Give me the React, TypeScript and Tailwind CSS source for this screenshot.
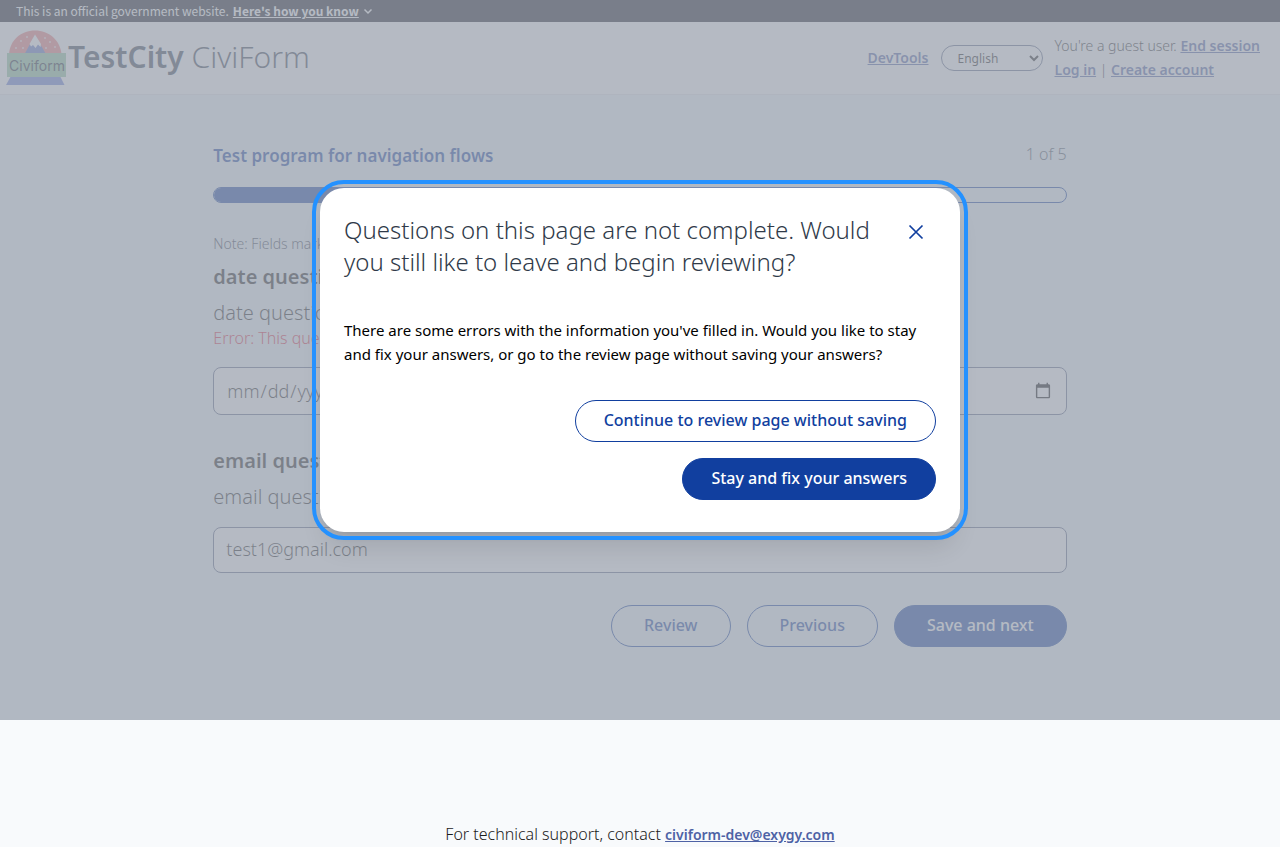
import React from 'react';

const outlineButton =
  'h-[42px] rounded-full border border-[#113f9f] pb-0.5 text-base font-medium text-[#113f9f] cursor-pointer whitespace-nowrap';
const solidButton =
  'h-[42px] rounded-full border border-[#113f9f] bg-[#113f9f] pb-0.5 text-base font-medium text-white cursor-pointer whitespace-nowrap';
const link = 'text-sm font-semibold text-[#4e62a5] underline';

function Logo() {
  return (
    <svg width="62" height="58" viewBox="0 0 62 58" role="img" aria-label="Civiform logo">
      <path d="M3 25 C4 11 15 1.500 29 1.500 S54 11 55.500 25 Z" fill="#f08080" />
      <g fill="#fff" fillOpacity="0.7">
        <circle cx="15" cy="12" r="1" />
        <circle cx="21" cy="8" r="1" />
        <circle cx="10" cy="19" r="1" />
        <circle cx="17" cy="19" r="1" />
        <circle cx="39" cy="9" r="1" />
        <circle cx="44" cy="13" r="1" />
        <circle cx="40" cy="19" r="1" />
        <circle cx="49" cy="18" r="1" />
      </g>
      <path d="M29 6 L40.500 26 H18 Z" fill="#6078c8" />
      <path d="M29 5.500 L35 15 L34.500 18 L32 15.500 L29.500 19 L27 16 L25 17.500 L23.500 15 Z" fill="#fff" />
      <path d="M5 47 H54 L58.500 56 H0 Z" fill="#6a80d8" />
      <rect x="1" y="24" width="59" height="24" fill="#90c8a0" />
      <text x="31" y="42" textAnchor="middle" fontSize="14" fontFamily="Inter, sans-serif" fill="#1f2937">
        Civiform
      </text>
    </svg>
  );
}

function Banner() {
  return (
    <div className="flex h-[22px] items-center gap-1 bg-[#10131c] px-4 font-['Noto_Sans_CJK_JP',sans-serif] text-xs leading-none text-white">
      <p>This is an official government website.</p>
      <button type="button" className="flex cursor-pointer items-center gap-1 font-bold">
        <span className="underline">Here&#39;s how you know</span>
        <svg width="10" height="10" viewBox="0 0 10 10" fill="none" stroke="currentColor" strokeWidth="1.500" aria-hidden="true">
          <path d="M1.500 3.500 L5 7 L8.500 3.500" />
        </svg>
      </button>
    </div>
  );
}

function Header() {
  return (
    <header className="flex h-[73px] items-center justify-between border-b border-[#e5e7eb] bg-white pr-5 pl-1.5">
      <div className="flex items-center">
        <Logo />
        <p className="pb-0.5 text-3xl font-light text-[#374151]">
          <span className="font-semibold">TestCity</span> CiviForm
        </p>
      </div>
      <div className="flex items-center gap-3">
        <a href="#devtools" className={link}>DevTools</a>
        <select
          aria-label="Language"
          defaultValue="en"
          className="h-[26px] w-[102px] rounded-full border border-[#5b6786] bg-white pl-3 text-xs text-[#1b1b1b]"
        >
          <option value="en">English</option>
          <option value="es">Español</option>
        </select>
        <div className="text-sm leading-6 font-light text-[#1b1b1b]">
          <p>
            You&#39;re a guest user. <a href="#end" className={link}>End session</a>
          </p>
          <p>
            <a href="#login" className={link}>Log in</a> | <a href="#create" className={link}>Create account</a>
          </p>
        </div>
      </div>
    </header>
  );
}

function Form() {
  return (
    <main className="bg-[#eff6fa] pt-12 pb-[73px]">
      <form className="mx-auto w-2/3" onSubmit={(e) => e.preventDefault()}>
        <div className="flex justify-between">
          <h1 className="text-[17px] leading-[26px] font-semibold text-[#113f9f]">Test program for navigation flows</h1>
          <span className="text-base leading-[22px] font-light text-[#4b5563]">1 of 5</span>
        </div>
        <div className="mt-[18px] h-4 overflow-hidden rounded-full border border-[#113f9f]">
          <div className="h-full w-1/5 bg-[#113f9f]" />
        </div>
        <p className="mt-[30px] text-sm leading-[22px] font-light text-[#374151]">
          Note: Fields marked with a * are required.
        </p>
        <div className="pt-1.5">
          <label htmlFor="date" className="block text-xl leading-8 font-semibold text-[#1b1b1b]">date question *</label>
          <p className="mt-1 text-xl leading-8 font-light text-[#1b1b1b]">date question help text</p>
          <p className="text-base leading-[18px] font-light text-[#dc2640]">Error: This question is required.</p>
          <input
            id="date"
            type="date"
            className="mt-5 block h-12 w-full rounded-lg border border-[#5b6786] bg-white px-3 text-lg font-light text-[#1b1b1b]"
          />
        </div>
        <div className="pt-[30px]">
          <label htmlFor="email" className="block text-xl leading-8 font-semibold text-[#1b1b1b]">email question *</label>
          <p className="mt-1 text-xl leading-8 font-light text-[#1b1b1b]">email question help text</p>
          <input
            id="email"
            type="email"
            defaultValue="test1@gmail.com"
            className="mt-[14px] block h-[46px] w-full rounded-lg border border-[#5b6786] bg-white px-3 pb-0.5 text-lg font-light text-[#1b1b1b]"
          />
        </div>
        <div className="mt-8 flex justify-end gap-4">
          <button type="button" className={`${outlineButton} px-8`}>Review</button>
          <button type="button" className={`${outlineButton} px-8`}>Previous</button>
          <button type="submit" className={`${solidButton} px-8`}>Save and next</button>
        </div>
      </form>
    </main>
  );
}

function ReviewDialog() {
  return (
    <div className="absolute inset-x-0 top-0 flex h-[720px] items-center justify-center bg-[#9ca3af]/75">
      <div
        role="dialog"
        aria-modal="true"
        aria-labelledby="dialog-title"
        className="w-full max-w-[640px] rounded-3xl bg-white p-6 pb-8 shadow-xl outline-4 outline-offset-4 outline-[#2491ff]"
      >
        <div className="flex items-start justify-between">
          <h2 id="dialog-title" className="max-w-[536px] pt-0.5 text-2xl leading-8 font-light text-[#2f3a49]">
            Questions on this page are not complete. Would you still like to leave and begin reviewing?
          </h2>
          <button type="button" aria-label="Close" className="flex size-10 cursor-pointer items-center justify-center text-[#113f9f]">
            <svg width="16" height="16" viewBox="0 0 16 16" fill="none" stroke="currentColor" strokeWidth="1.700" aria-hidden="true">
              <path d="M1.500 1.500 L14.500 14.500 M14.500 1.500 L1.500 14.500" />
            </svg>
          </button>
        </div>
        <p className="mt-10 text-[15px] leading-6 text-black">
          There are some errors with the information you&#39;ve filled in. Would you like to stay and fix your answers,
          or go to the review page without saving your answers?
        </p>
        <div className="mt-[34px] flex flex-col items-end gap-4">
          <button type="button" className={`${outlineButton} px-7`}>Continue to review page without saving</button>
          <button type="button" className={`${solidButton} px-7`}>Stay and fix your answers</button>
        </div>
      </div>
    </div>
  );
}

export default function App() {
  return (
    <div className="relative min-h-screen bg-[#f8fafc] font-['Noto_Sans',sans-serif]">
      <Banner />
      <Header />
      <Form />
      <footer className="pt-[102px] text-center text-base leading-6 font-light text-[#1b1b1b]">
        For technical support, contact <a href="mailto:civiform-dev@exygy.com" className={link}>civiform-dev@exygy.com</a>
      </footer>
      <ReviewDialog />
    </div>
  );
}
